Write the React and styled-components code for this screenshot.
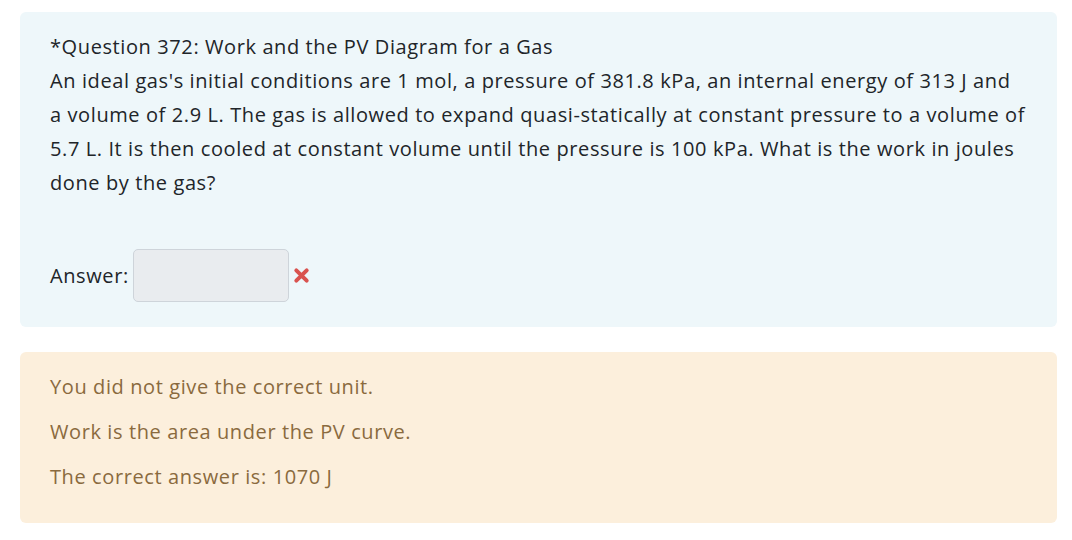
import React from 'react';
import styled, { createGlobalStyle } from 'styled-components';

const GlobalStyle = createGlobalStyle`
  body {
    margin: 0;
    background: #ffffff;
    font-family: "Open Sans", "Noto Sans", sans-serif;
  }
`;

const Page = styled.div`
  display: flex;
  flex-direction: column;
  gap: 25px;
  padding: 12px 15px 0 20px;
`;

const Card = styled.div`
  background: ${props => (props.warning ? '#fcefdc' : '#eef7fa')};
  color: ${props => (props.warning ? '#8a6a3e' : '#212529')};
  border-radius: 6px;
  padding: ${props => (props.warning ? '12px 30px 24px' : '18px 30px 25px')};
  font-size: 20px;
  letter-spacing: 0.6px;
`;

const Question = styled.div`
  line-height: 34px;
`;

const Line = styled.span`
  display: block;
  white-space: nowrap;
`;

const AnswerRow = styled.div`
  display: flex;
  align-items: center;
  gap: 4px;
  margin-top: 49px;
`;

const Input = styled.input`
  width: 156px;
  height: 53px;
  box-sizing: border-box;
  background: #e9ecef;
  border: 1px solid #ced4da;
  border-radius: 5px;
`;

const Cross = styled.svg`
  width: 17px;
  height: 17px;
`;

const Feedback = styled.p`
  margin: 0;
  line-height: 45px;
`;

const questionLines = [
  '*Question 372: Work and the PV Diagram for a Gas',
  "An ideal gas's initial conditions are 1 mol, a pressure of 381.8 kPa, an internal energy of 313 J and",
  'a volume of 2.9 L. The gas is allowed to expand quasi-statically at constant pressure to a volume of',
  '5.7 L. It is then cooled at constant volume until the pressure is 100 kPa. What is the work in joules',
  'done by the gas?',
];

export default function App() {
  return (
    <>
      <GlobalStyle />
      <Page>
        <Card>
          <Question>
            {questionLines.map(l => (
              <Line key={l}>{l}</Line>
            ))}
          </Question>
          <AnswerRow>
            <span>Answer:</span>
            <Input type="text" disabled />
            <Cross viewBox="0 0 18 18">
              <path d="M3.5 3.5 L14.5 14.5 M14.5 3.5 L3.5 14.5" stroke="#d9534f" strokeWidth="4.2" strokeLinecap="round" />
            </Cross>
          </AnswerRow>
        </Card>
        <Card warning>
          <Feedback>You did not give the correct unit.</Feedback>
          <Feedback>Work is the area under the PV curve.</Feedback>
          <Feedback>The correct answer is: 1070 J</Feedback>
        </Card>
      </Page>
    </>
  );
}
